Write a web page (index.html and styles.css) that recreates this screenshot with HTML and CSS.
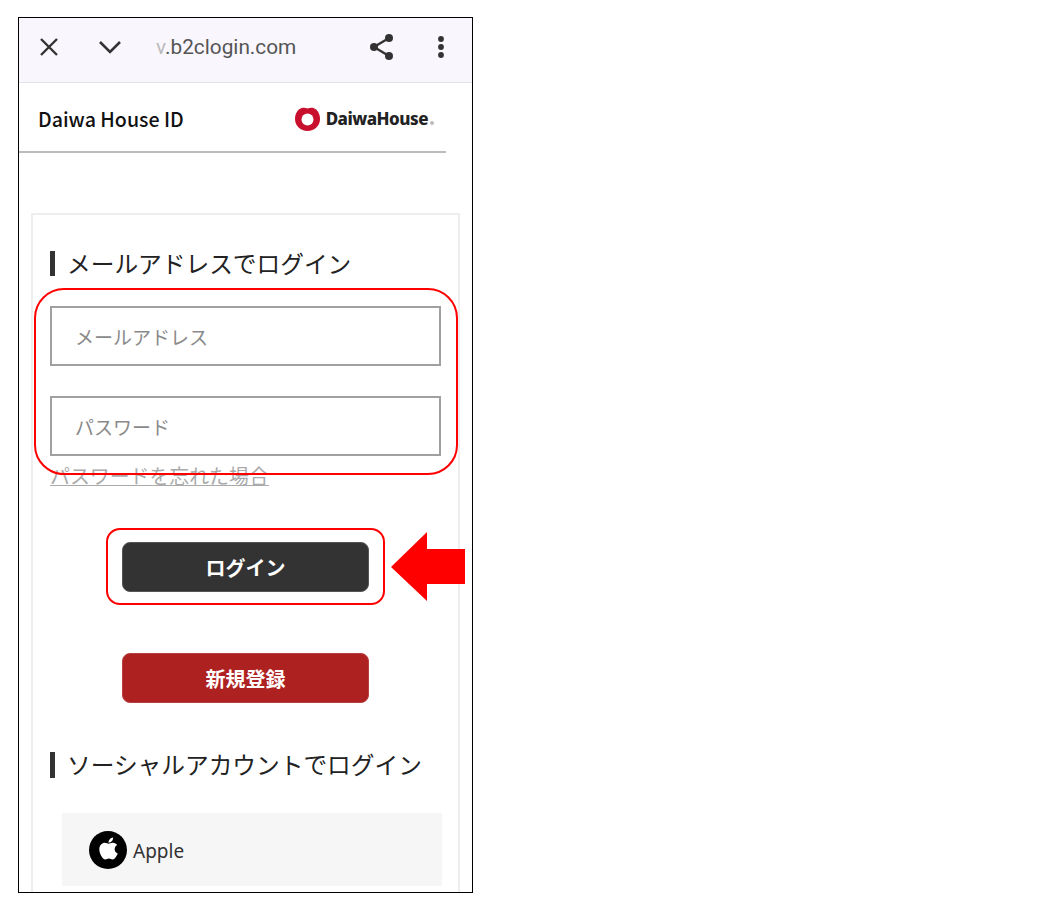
FILE: index.html
```html
<!DOCTYPE html>
<html lang="ja">
<head>
	<meta charset="utf-8"/>
	<title>Daiwa House ID</title>
	<link rel="stylesheet" href="styles.css">
</head>
<body>
	<div class="phone">
		<div class="toolbar">
			<svg class="tb-close" width="20" height="20" viewBox="0 0 20 20"><path d="M2 2 18 18M18 2 2 18" stroke="#333" stroke-width="2.4" fill="none"/></svg>
			<svg class="tb-chevron" width="24" height="14" viewBox="0 0 24 14"><path d="M2 2 12 12 22 2" stroke="#333" stroke-width="2.6" fill="none"/></svg>
			<span class="tb-url"><span class="tb-fade">v</span>.b2clogin.com</span>
			<svg class="tb-share" width="26" height="28" viewBox="0 0 26 28"><path d="M20 5 5 14 20 23" stroke="#333" stroke-width="2.4" fill="none"/><circle cx="20" cy="5" r="4" fill="#333"/><circle cx="5" cy="14" r="4" fill="#333"/><circle cx="20" cy="23" r="4" fill="#333"/></svg>
			<svg class="tb-dots" width="8" height="24" viewBox="0 0 8 24"><circle cx="4" cy="4" r="2.9" fill="#333"/><circle cx="4" cy="12" r="2.9" fill="#333"/><circle cx="4" cy="20" r="2.9" fill="#333"/></svg>
		</div>

		<div class="header">
			<span class="header-title">Daiwa House ID</span>
			<span class="logo">
				<svg width="25" height="24" viewBox="0 0 25 24"><path d="M12.500 1.500C10 .2 6 .3 3.500 2.800.8 5.500 0 8.800 0 12c0 6.800 5.500 12 12.500 12S25 18.800 25 12c0-3.200-.8-6.500-3.500-9.200C19 .3 15 .2 12.500 1.500z" fill="#c8102e"/><ellipse cx="12.500" cy="12.500" rx="6" ry="6" fill="#fff"/></svg>
				<span class="logo-text">DaiwaHouse</span><span class="logo-dot"></span>
			</span>
		</div>

		<div class="card">
			<h2 class="heading">メールアドレスでログイン</h2>
			<input class="field" type="text" placeholder="メールアドレス">
			<input class="field" type="password" placeholder="パスワード">
			<a class="forgot" href="#">パスワードを忘れた場合</a>
			<button class="btn btn-login">ログイン</button>
			<button class="btn btn-signup">新規登録</button>
			<h2 class="heading heading-social">ソーシャルアカウントでログイン</h2>
			<div class="social">
				<span class="social-icon">
					<svg width="21" height="25" viewBox="0 0 384 512"><path fill="#fff" d="M318.700 268.700c-.2-36.700 16.400-64.400 50-84.800-18.800-26.900-47.200-41.700-84.700-44.600-35.500-2.800-74.300 20.700-88.500 20.700-15 0-49.400-19.700-76.400-19.700C63.300 141.200 4 184.800 4 273.500q0 39.300 14.400 81.200c12.800 36.700 59 126.700 107.200 125.200 25.200-.6 43-17.900 75.800-17.900 31.800 0 48.300 17.900 76.400 17.900 48.600-.7 90.400-82.500 102.600-119.300-65.200-30.700-61.700-90-61.700-91.900zm-56.600-164.200c27.300-32.400 24.800-61.900 24-72.500-24.100 1.400-52 16.400-67.900 34.900-17.500 19.800-27.800 44.300-25.600 71.900 26.100 2 49.900-11.400 69.500-34.300z"/></svg>
				</span>
				<span class="social-name">Apple</span>
			</div>
		</div>

		<!-- red annotations drawn over the screenshot -->
		<div class="mark mark-fields"></div>
		<div class="mark mark-login"></div>
		<svg class="mark-arrow" width="74" height="69" viewBox="0 0 74 69"><path d="M0 35 36 0V17H74V52H36V69z" fill="#f00"/></svg>
	</div>
</body>
</html>
```

FILE: styles.css
```css
html, body { height:100%; overflow:hidden; }
body { margin:0; background:#fff; font-family:"Noto Sans","Noto Sans CJK JP",sans-serif; color:#333; }

.phone { position:relative; box-sizing:border-box; width:455px; height:876px; margin:17px 0 0 18px; border:1px solid #000; overflow:hidden; background:#fff; }

.toolbar { display:flex; align-items:center; box-sizing:border-box; height:65px; padding:0 0 6px 20px; background:#f9f7fd; border-bottom:1px solid #e4e2e8; }
.tb-chevron { margin-left:39px; }
.tb-url { margin-left:34px; width:139px; font:20.800px "Roboto",sans-serif; color:#555; white-space:nowrap; }
.tb-fade { color:#bbb; }
.tb-share { margin-left:74px; }
.tb-dots { margin-left:42px; }

.header { display:flex; align-items:center; justify-content:space-between; box-sizing:border-box; width:427px; height:70px; padding:3px 12px 0 19px; border-bottom:2px solid #bbb; }
.header-title { font-family:"Noto Sans CJK JP",sans-serif; font-size:19.600px; font-weight:500; color:#111; }
.logo { display:flex; align-items:center; }
.logo svg { margin-right:6px; }
.logo-text { font-size:17px; font-weight:800; letter-spacing:-.5px; color:#222; }
.logo-dot { width:4px; height:4px; margin:8px 0 0 2px; border-radius:50%; background:#bbb; }

.card { box-sizing:border-box; width:429px; height:720px; margin:60px 0 0 12px; padding:36px 17px 0; border:2px solid #eee; }

.heading { margin:0 0 30px; padding:1px 0 0 12px; height:25px; box-sizing:border-box; border-left:5px solid #333; font-size:23.700px; font-weight:400; line-height:25px; white-space:nowrap; color:#222; }
.heading-social { margin:49px 0 35px; height:26px; }

.field { display:block; box-sizing:border-box; width:391px; height:60px; margin-bottom:30px; padding:0 23px; border:2px solid #a0a0a0; border-radius:0; background:#fff; font:19px "Noto Sans CJK JP",sans-serif; outline:none; }
.field::placeholder { color:#8a8a8a; opacity:1; }

.forgot { display:block; margin-top:-20px; font-size:19.900px; line-height:22px; color:#aaa; text-decoration:underline; white-space:nowrap; }

.btn { display:block; box-sizing:border-box; width:247px; height:50px; margin:0 auto; border-radius:8px; color:#fff; font:700 20px "Noto Sans CJK JP",sans-serif; }
.btn-login { margin-top:54px; background:#333; border:1px solid #555; }
.btn-signup { margin-top:61px; background:#ae2121; border:1px solid #b84040; }

.social { display:flex; align-items:center; box-sizing:border-box; width:380px; height:73px; margin-left:12px; padding:0 0 0 27px; background:#f6f6f6; }
.social-icon { display:flex; align-items:center; justify-content:center; box-sizing:border-box; width:38px; height:38px; padding-bottom:3px; border-radius:50%; background:#000; }
.social-name { margin:2px 0 0 6px; font-size:19px; color:#333; }

.mark { position:absolute; box-sizing:border-box; border:2px solid #f00; }
.mark-fields { left:15px; top:270px; width:424px; height:187px; border-radius:30px; }
.mark-login { left:87px; top:510px; width:279px; height:77px; border-radius:14px; }
.mark-arrow { position:absolute; left:372px; top:514px; }
```
